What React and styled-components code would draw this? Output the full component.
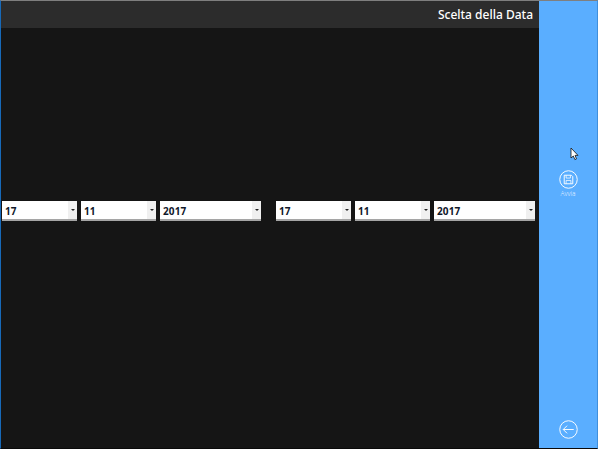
import React from "react";
import styled, { createGlobalStyle } from "styled-components";

const Global = createGlobalStyle`
  html, body { margin: 0; padding: 0; background: #151515; }
  #root { width: 598px; height: 449px; overflow: hidden; }
`;
const Frame = styled.div`
  width: 598px; height: 449px; box-sizing: border-box;
  display: flex; position: relative;
  background: #151515;
  border-top: 1px solid #7f7f7f;
  border-left: 1px solid #1769b8;
  border-right: 1px solid #3f8fdc;
  border-bottom: 1px solid #0a0a0a;
  font-family: "Open Sans", "Noto Sans", sans-serif;
`;
const Main = styled.main`
  width: 538px; flex: none; display: flex; flex-direction: column;
`;
const Header = styled.header`
  height: 27px; box-sizing: border-box; flex: none;
  background: #2c2c2c;
  display: flex; align-items: center; justify-content: flex-end;
  padding-right: 6px;
`;
const Title = styled.h1`
  margin: 0; color: #fff; font-size: 12px; font-weight: 500; line-height: 28px;
  font-family: "Noto Sans", "Open Sans", sans-serif;
`;
const Row = styled.div`
  display: flex; padding: 173px 0 0 1px;
`;
const Select = styled.div`
  width: ${p => p.$w}px; height: 20px; box-sizing: border-box; flex: none;
  margin-right: ${p => p.$gap}px;
  background: #fff; border-bottom: 2px solid #a5a5a5;
  display: flex; align-items: center; justify-content: space-between;
`;
const Value = styled.span`
  padding: 2px 0 0 3px; font-size: 10px; font-weight: 700; color: #10182a;
  font-family: "Open Sans", sans-serif; line-height: 18px; letter-spacing: .1px;
`;
const Drop = styled.span`
  width: 9px; height: 18px; background: #f0f0f0;
  display: flex; align-items: center; justify-content: center;
  &::after {
    content: ""; border-left: 2px solid transparent; border-right: 2px solid transparent;
    border-top: 2px solid #222;
  }
`;
const Sidebar = styled.aside`
  flex: 1; background: #5aaeff; display: flex; flex-direction: column; align-items: center;
  justify-content: space-between; padding: 169px 0 9px;
`;
const Action = styled.button`
  all: unset; display: flex; flex-direction: column; align-items: center; color: #fff;
`;
const Label = styled.span`
  font-size: 6.5px; line-height: 7px; margin-top: 1px; color: #eef6ff; font-weight: 300;
  font-family: "Open Sans", sans-serif;
`;
const Cursor = styled.svg`
  position: absolute; left: 569px; top: 146px;
`;

const fields = [
  ["17", 75, 4], ["11", 75, 4], ["2017", 101, 15],
  ["17", 75, 4], ["11", 75, 4], ["2017", 101, 0],
];

export default function App() {
  return (
    <Frame>
      <Global />
      <Main>
        <Header><Title>Scelta della Data</Title></Header>
        <Row>
          {fields.map(([v, w, g], i) => (
            <Select key={i} $w={w} $gap={g}>
              <Value>{v}</Value>
              <Drop />
            </Select>
          ))}
        </Row>
      </Main>
      <Sidebar>
        <Action>
          <svg width="19" height="19" viewBox="0 0 20 20" fill="none" stroke="#fff">
            <circle cx="10" cy="10" r="9.2" strokeWidth="1" />
            <path d="M5.5 5.5h7.5l1.5 1.5v7.5h-9z" strokeWidth="1" />
            <path d="M7.5 5.5v3h4.5v-3M7.5 14.5v-3.5h5v3.5" strokeWidth=".8" />
          </svg>
          <Label>Avvia</Label>
        </Action>
        <Action>
          <svg width="19" height="19" viewBox="0 0 20 20" fill="none" stroke="#fff" strokeWidth="1">
            <circle cx="10" cy="10" r="9.2" />
            <path d="M15.5 10H4.5M8.5 6l-4 4 4 4" />
          </svg>
        </Action>
      </Sidebar>
      <Cursor width="10" height="14" viewBox="0 0 10 14">
        <path d="M1 1v10l2.3-2 1.6 3.6 1.6-.7L5 8.4h3z" fill="#fff" stroke="#111" strokeWidth=".8" />
      </Cursor>
    </Frame>
  );
}
